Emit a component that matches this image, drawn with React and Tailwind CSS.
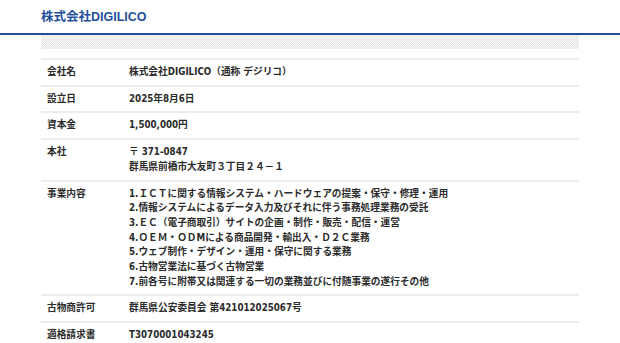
import React from 'react';

const FONT = { fontFamily: '"DejaVu Sans Condensed", "DejaVu Sans", "Noto Sans CJK JP", sans-serif' };

const ROWS = [
  { label: '会社名', lines: ['株式会社DIGILICO（通称 デジリコ）'] },
  { label: '設立日', lines: ['2025年8月6日'] },
  { label: '資本金', lines: ['1,500,000円'] },
  { label: '本社', lines: ['〒 371-0847', '群馬県前橋市大友町３丁目２４－１'] },
  {
    label: '事業内容',
    lines: [
      '1.ＩＣＴに関する情報システム・ハードウェアの提案・保守・修理・運用',
      '2.情報システムによるデータ入力及びそれに伴う事務処理業務の受託',
      '3.ＥＣ（電子商取引）サイトの企画・制作・販売・配信・運営',
      '4.ＯＥＭ・ＯＤMによる商品開発・輸出入・Ｄ２Ｃ業務',
      '5.ウェブ制作・デザイン・運用・保守に関する業務',
      '6.古物営業法に基づく古物営業',
      '7.前各号に附帯又は関連する一切の業務並びに付随事業の遂行その他',
    ],
  },
  { label: '古物商許可', lines: ['群馬県公安委員会 第421012025067号'] },
  { label: '適格請求書', lines: ['T3070001043245'] },
];

function App() {
  return (
    <div className="min-h-screen bg-white text-[#2b2b2b]" style={FONT}>
      {/* Header */}
      <header className="h-[35px] border-b-2 border-[#1d4f9c]">
        <div className="pl-[41px] pt-[9px] font-['Liberation_Sans','Noto_Sans_CJK_JP',sans-serif] text-[12.5px] font-bold leading-[16px] text-[#1f4f9b]">
          株式会社DIGILICO
        </div>
      </header>

      <main className="mx-[41px]">
        {/* Pattern bar */}
        <div className="h-[14px] bg-[#f2f2f2] bg-[image:repeating-conic-gradient(#e6e6e6_0%_25%,#f7f7f7_0%_50%)] bg-[length:2px_2px]"></div>

        {/* Company table */}
        <div className="mt-[9px]">
          {ROWS.map((row) => (
            <div key={row.label} className="flex border-t-2 border-[#e9ecf0] py-[5px] text-[9.7px] font-bold leading-[14.7px]">
              <div className="w-[88px] shrink-0 pl-[6px]">{row.label}</div>
              <div>
                {row.lines.map((line) => (
                  <div key={line} className="whitespace-nowrap">{line}</div>
                ))}
              </div>
            </div>
          ))}
        </div>
      </main>
    </div>
  );
}

export default App;
